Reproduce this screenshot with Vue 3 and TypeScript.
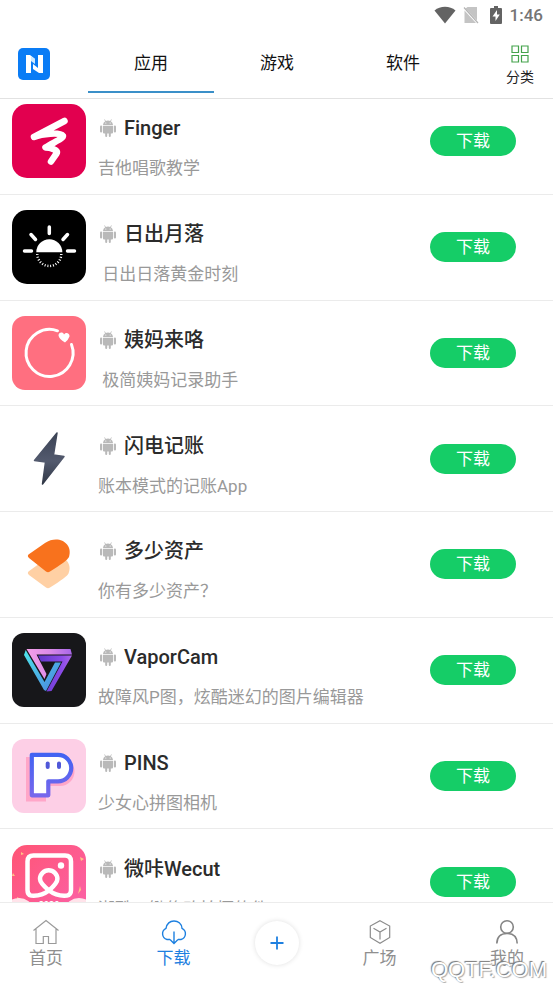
<script setup lang="ts">
import { ref } from 'vue'

interface AppItem {
  id: string
  name: string
  desc: string
}

const tabs: string[] = ['应用', '游戏', '软件']
const activeTab = ref<string>('应用')

const apps: AppItem[] = [
  { id: 'finger', name: 'Finger', desc: '吉他唱歌教学' },
  { id: 'sun', name: '日出月落', desc: ' 日出日落黄金时刻' },
  { id: 'ring', name: '姨妈来咯', desc: ' 极简姨妈记录助手' },
  { id: 'bolt', name: '闪电记账', desc: '账本模式的记账App' },
  { id: 'asset', name: '多少资产', desc: '你有多少资产？' },
  { id: 'vapor', name: 'VaporCam', desc: '故障风P图，炫酷迷幻的图片编辑器' },
  { id: 'pins', name: 'PINS', desc: '少女心拼图相机' },
  { id: 'wecut', name: '微咔Wecut', desc: '潮酷一键修改拍摄软件' },
]
</script>

<template>
  <div class="screen">
    <div class="status">
      <svg class="wifi" width="22" height="18" viewBox="0 0 22 18"><path d="M11 17.500 0.500 4.500Q5 .800 11 .800t10.500 3.700z" fill="#636363" /></svg>
      <svg class="sim" width="16" height="18" viewBox="0 0 16 18"><path d="M4.500 1H14v13.500L2.500 2.500zM1.500 4.500 13 17H1.500z" fill="#c4c4c4" /><path d="M1 1.500 15 17" stroke="#b4b4b4" stroke-width="1.200" /></svg>
      <svg class="battery" width="12" height="18" viewBox="0 0 12 18"><path d="M4 0h4v2h3q1 0 1 1v14q0 1-1 1H1q-1 0-1-1V3q0-1 1-1h3z" fill="#636363" /><path d="M7 4 2.500 10.500h3V15L9.800 8.500H7z" fill="#fff" /></svg>
      <span class="clock">1:46</span>
    </div>

    <header class="top">
      <a class="logo" href="#" aria-label="N">
        <svg width="32" height="32" viewBox="0 0 32 32">
          <rect width="32" height="32" rx="5" fill="#0a7cf5" />
          <path d="M8 7h4l5 4v4l-4-3v13H8z" fill="#fff" />
          <path d="M25 25h-4l-6-4v-5l5 4V7h5z" fill="#fff" />
          <path d="m13 8 4 3v5l-4-3z" fill="#cfeaff" />
        </svg>
      </a>
      <nav class="tabs">
        <button v-for="tab in tabs" :key="tab" type="button" class="tab" :class="{ active: tab === activeTab }" @click="activeTab = tab">{{ tab }}</button>
      </nav>
      <button type="button" class="category">
        <svg width="18" height="18" viewBox="0 0 18 18" fill="none" stroke="#45a34c" stroke-width="1.200">
          <path d="M1 1h6.500v6.500H1zM10.500 1H17v6.500h-6.500zM1 10.500h6.500V17H1zM10.500 10.500H17V17h-6.500z" />
        </svg>
        <span>分类</span>
      </button>
    </header>

    <main class="content">
      <ul class="list">
        <li v-for="app in apps" :key="app.id" class="row">
          <svg class="icon" viewBox="0 0 74 74">
            <g v-if="app.id === 'finger'">
              <rect width="74" height="74" rx="15" fill="#e2004f" />
              <path d="M52.500 17 22 33C30 29.500 48 28 51 32 51.500 34.500 40 39 33.500 43.500 38 43.500 47 46 44.500 49.500L39 57.500" fill="none" stroke="#fff" stroke-width="6.500" stroke-linecap="round" stroke-linejoin="round" />
            </g>
            <g v-else-if="app.id === 'sun'">
              <rect width="74" height="74" rx="15" fill="#000" />
              <path d="M24.300 42.300a13 13 0 0 1 26 0z" fill="#fff" />
              <path d="M37.300 17v6.500M12.500 41h7M55.500 41h7M19 24.500l4.500 5M55.500 24.500l-4.500 5" stroke="#fff" stroke-width="3.500" stroke-linecap="round" />
              <path d="M25.300 44a12 12 0 0 0 24 0" fill="none" stroke="#fff" stroke-width="2.500" stroke-dasharray="1 1.800" />
            </g>
            <g v-else-if="app.id === 'ring'">
              <rect width="74" height="74" rx="13" fill="#ff6f80" />
              <path d="M45.500 14.800A23.500 23.500 0 1 0 59.500 28.500" fill="none" stroke="#fff" stroke-width="3" stroke-linecap="round" />
              <path d="M53 26.500Q47 23 46.500 19.500C46.500 16 51 15.500 52 18.500 53.500 15.500 58 17 57.500 20.500Q56.500 23.500 53 26.500z" fill="#fff" />
            </g>
            <g v-else-if="app.id === 'bolt'">
              <defs><linearGradient id="boltFill" x1="0" y1="0" x2="0" y2="1"><stop offset="0" stop-color="#3b4355" /><stop offset=".55" stop-color="#535a6e" /><stop offset="1" stop-color="#303746" /></linearGradient></defs>
              <path d="M45 11 22.500 38.500 33.500 40 30.500 62 52 34.500 41.500 33z" fill="url(#boltFill)" stroke="url(#boltFill)" stroke-width="1.500" stroke-linejoin="round" />
            </g>
            <g v-else-if="app.id === 'asset'">
              <path d="M16.500 44.500 35 31C47 24 62 34 56.500 46.500Q55 50 38 60.500q-2 1.500-4 0l-17-12.500q-2-2-.500-3.500z" fill="#ffd0a4" />
              <path d="M16.500 27.500 33 16C46 7 61.500 16 57 30Q55 34 38 44.500q-2 1.500-4 0L17 31q-2-2-.500-3.500z" fill="#f8721d" />
            </g>
            <g v-else-if="app.id === 'vapor'">
              <defs>
                <linearGradient id="vaporTop"><stop offset="0" stop-color="#f4a0e8" /><stop offset=".5" stop-color="#dc8be8" /><stop offset="1" stop-color="#a866e8" /></linearGradient>
                <linearGradient id="vaporLeft" x1="0" y1="0" x2="1" y2="1"><stop offset="0" stop-color="#4de6ea" /><stop offset="1" stop-color="#4a7fe0" /></linearGradient>
                <linearGradient id="vaporRight"><stop offset="0" stop-color="#6136c8" /><stop offset=".7" stop-color="#8b4be8" /><stop offset="1" stop-color="#ac65e8" /></linearGradient>
              </defs>
              <rect width="74" height="74" rx="12" fill="#17171a" />
              <path d="M14.500 16H58.500L60 21.500H24.500L34.500 41 32.500 46z" fill="url(#vaporTop)" />
              <path d="M12 22 13.700 17 32.500 49 43 29.500H49L34 58 32 57z" fill="url(#vaporLeft)" />
              <path d="M26 22.500H60L39.500 58 34.500 58.500 50.500 28.500H29z" fill="url(#vaporRight)" />
            </g>
            <g v-else-if="app.id === 'pins'">
              <defs><linearGradient id="pinsLine" x1="0" y1="0" x2="0" y2="1"><stop offset="0" stop-color="#4263f2" /><stop offset="1" stop-color="#7767ec" /></linearGradient></defs>
              <rect width="74" height="74" rx="12" fill="#fdcfe6" />
              <path d="M14 18h34a14 14 0 0 1 0 29H34v15.500H14z" fill="#ffa6c8" />
              <path d="M19.800 15.800H46a13 13 0 0 1 0 26.500H36.300v14H19.800z" fill="#fff" stroke="url(#pinsLine)" stroke-width="4.200" stroke-linejoin="round" />
              <rect x="33.700" y="22.500" width="4" height="7.500" rx="2" fill="#5058d8" /><rect x="45" y="22.500" width="4" height="7.500" rx="2" fill="#5058d8" />
            </g>
            <g v-else>
              <defs>
                <linearGradient id="wecutBg" x1="0" y1="0" x2="1" y2="1"><stop offset="0" stop-color="#ff5575" /><stop offset="1" stop-color="#fb62aa" /></linearGradient>
                <clipPath id="wecutClip"><rect width="74" height="74" rx="15" /></clipPath>
              </defs>
              <g clip-path="url(#wecutClip)">
                <rect width="74" height="74" fill="url(#wecutBg)" />
                <path d="M37 45.500Q28 38 28 34a8.700 8.700 0 0 1 17.400 0Q45.400 38 37 45.500 29 51.500 19 50.500 15.500 50 15.500 45V16.500Q15.500 10.500 21.500 10.500H53Q59 10.500 59 16.500V45Q59 50 55 50.500 45 51.500 37 45.500z" fill="none" stroke="#fff" stroke-width="4.500" stroke-linejoin="round" />
                <circle cx="49" cy="20.500" r="3.200" fill="#fff" />
                <path d="m9 7 3 2-3 1zM68 12l4 2-3 2zM1 28l2 3H0zM67 45l1-4 1 4-3 4zM5 52l4 2-4 1z" fill="#ffc486" />
                <ellipse cx="7" cy="63" rx="13" ry="10" fill="#ffe3ea" /><ellipse cx="67" cy="63" rx="13" ry="10" fill="#ffe3ea" />
                <text x="37" y="63" class="year">2020</text>
              </g>
            </g>
          </svg>

          <div class="info">
            <h2 class="name">
              <svg class="droid" width="16" height="18" viewBox="0 0 16 18" fill="#b9b9b9">
                <path d="M3 6Q3.200 3.500 5.200 2.300L4.200.700l.600-.400 1 1.600q2.200-.800 4.400 0l1-1.600.600.400-1 1.600Q12.800 3.500 13 6zM3 6.700h10v6.800q0 1-1 1h-1.200V17q0 1-1 1t-1-1v-2.500H7.200V17q0 1-1 1t-1-1v-2.500H4q-1 0-1-1z" />
                <rect y="6.500" width="2.200" height="7" rx="1.100" /><rect x="13.800" y="6.500" width="2.200" height="7" rx="1.100" />
                <circle cx="5.800" cy="4" r=".6" fill="#fff" /><circle cx="10.200" cy="4" r=".6" fill="#fff" />
              </svg>
              <span>{{ app.name }}</span>
            </h2>
            <p class="desc">{{ app.desc }}</p>
          </div>
          <button type="button" class="download">下载</button>
        </li>
      </ul>
    </main>

    <nav class="bottom">
      <a href="#" class="item">
        <svg width="28" height="26" viewBox="0 0 28 26" fill="none" stroke="#9a9a9a" stroke-width="1.200"><path d="M1.500 11.500 14 1.500l12.500 10M4 9.700V24.500h7.300V17.500h5.200v7H24V9.700" /></svg>
        <span>首页</span>
      </a>
      <a href="#" class="item current">
        <svg width="28" height="26" viewBox="0 0 28 26" fill="none" stroke="#1e80e0" stroke-width="1.400"><path d="M10 20.500H7A6 6 0 0 1 6 9.300C7 4.500 10 2 14 2s7.500 2.500 8 7.300a6 6 0 0 1-1 11.200h-3M14 12.500v12M10 20.500l4 4 4-4" /></svg>
        <span>下载</span>
      </a>
      <button type="button" class="plus" aria-label="+">
        <svg width="14" height="14" viewBox="0 0 14 14" stroke="#1e80e0" stroke-width="1.800"><path d="M7 0.500v13M.500 7h13" /></svg>
      </button>
      <a href="#" class="item">
        <svg width="28" height="26" viewBox="0 0 28 26" fill="none" stroke="#8c8c8c" stroke-width="1.200"><path d="M14 1.700 23.700 7v11.500L14 24.300 4.300 18.500V7zM7.500 9.300 14 13l6.500-3.700M14 13v7.500" /></svg>
        <span>广场</span>
      </a>
      <a href="#" class="item">
        <svg width="28" height="26" viewBox="0 0 28 26" fill="none" stroke="#858585" stroke-width="1.600"><circle cx="14" cy="8" r="6.300" /><path d="M3.800 24.500C4 18 8 14.500 14 14.500S24 18 24.200 24.500" /></svg>
        <span>我的</span>
      </a>
      <span class="mark">QQTF.COM</span>
    </nav>
  </div>
</template>

<style>
body {
  background: #fff;
}
</style>

<style scoped>
.screen {
  display: flex;
  flex-direction: column;
  height: 100vh;
  overflow: hidden;
  background: #fff;
  font-family: Roboto, "Noto Sans CJK SC", sans-serif;
  color: #222;
}
button {
  border: 0;
  padding: 0;
  background: none;
  font-family: inherit;
  color: inherit;
  cursor: pointer;
}
a {
  color: inherit;
  text-decoration: none;
}
svg {
  display: block;
  flex: none;
}
.status {
  flex: none;
  display: flex;
  justify-content: flex-end;
  align-items: center;
  height: 30px;
  padding-right: 10px;
}
.sim {
  margin-left: 7px;
}
.battery {
  margin-left: 11px;
}
.clock {
  margin-left: 8px;
  font-size: 17px;
  font-weight: 500;
  line-height: 20px;
  color: #757575;
}
.top {
  flex: none;
  display: grid;
  grid-template-columns: 88px 1fr 87px;
  height: 68px;
  border-bottom: 1px solid #e2e2e2;
}
.logo {
  padding: 18px;
}
.tabs {
  display: grid;
  grid-template-columns: repeat(3, 1fr);
  padding-bottom: 5px;
}
.tab {
  padding-top: 2px;
  border-bottom: 2px solid transparent;
  font-size: 17px;
  color: #111;
}
.tab.active {
  border-bottom-color: #3a8fc8;
}
.category {
  display: flex;
  flex-direction: column;
  align-items: center;
  gap: 4px;
  padding: 15px 0 0 21px;
  font-size: 14px;
  line-height: 20px;
}
.content {
  flex: 1;
  min-height: 0;
  overflow: hidden;
}
.list {
  display: grid;
  grid-auto-rows: 1fr;
  min-height: 846px;
  margin: -10px 0 0;
  padding: 0;
  list-style: none;
}
.row {
  display: flex;
  align-items: center;
  gap: 12px;
  padding: 0 37px 0 12px;
  border-bottom: 1px solid #ebebeb;
}
.icon {
  width: 74px;
  height: 74px;
}
.info {
  flex: 1;
  min-width: 0;
  padding-top: 14px;
}
.name {
  display: flex;
  align-items: center;
  gap: 8px;
  margin: 0;
  padding-left: 2px;
  font-size: 20px;
  font-weight: 500;
  line-height: 28px;
  color: #2b2b2b;
}
.desc {
  margin: 12px 0 0;
  font-size: 17px;
  line-height: 28px;
  color: #999;
  white-space: pre;
}
.download {
  width: 86px;
  height: 30px;
  border-radius: 15px;
  background: #15cd67;
  font-size: 17px;
  line-height: 30px;
  color: #fff;
}
.year {
  font-family: Roboto, sans-serif;
  font-size: 9px;
  font-weight: 700;
  text-anchor: middle;
  fill: #fff;
}
.bottom {
  position: relative;
  flex: none;
  display: grid;
  grid-template-columns: 92px 1fr 43px 1fr 92px;
  justify-items: center;
  height: 80px;
  border-top: 1px solid #ececec;
  background: #fff;
}
.item {
  display: flex;
  flex-direction: column;
  align-items: center;
  padding-top: 16px;
  font-size: 17px;
  line-height: 26px;
  color: #8f8f8f;
}
.item.current {
  color: #1e80e0;
}
.plus {
  display: grid;
  place-items: center;
  align-self: center;
  width: 44px;
  height: 44px;
  border-radius: 50%;
  background: #fff;
  box-shadow: 0 0 5px rgba(0, 0, 0, 0.13);
}
.mark {
  position: absolute;
  right: 6px;
  bottom: 1px;
  font-family: "Liberation Sans", sans-serif;
  font-size: 22px;
  line-height: 24px;
  color: #fff;
  text-shadow: -1px -1px 1px #777, 1px 1px 1px #aaa;
}
</style>
